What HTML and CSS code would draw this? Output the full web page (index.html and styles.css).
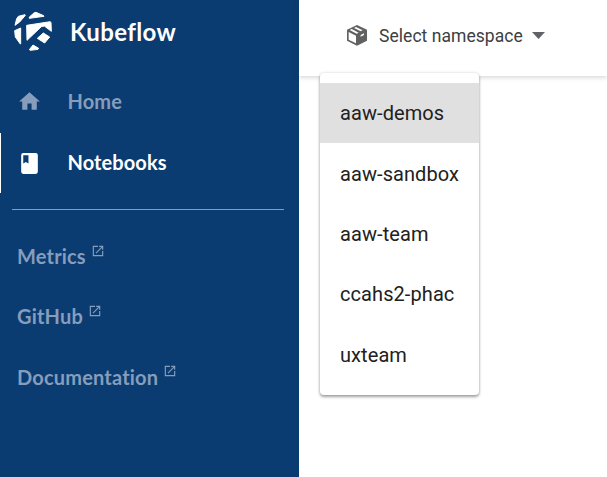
FILE: index.html
```
<!DOCTYPE html>
<html lang="en">
<head>
<meta charset="utf-8">
<title>Kubeflow</title>
<link rel="stylesheet" href="styles.css">
</head>
<body>
<div class="app">
  <aside class="sidebar">
    <div class="brand">
      <svg class="logo" width="40" height="40" viewBox="15 15 120 120"><path d="M64 33L79 20L84 19L107 29L108 31L64 37ZM21 58L26 38L31 31L51 26L52 28L35 48ZM20 74L38 66L38 114L37 114L22 93ZM56 58L127 47L129 50L130 76L109 60L100 62L57 103ZM88 97L106 81L125 93L110 111ZM64 131L75 117L92 127L90 130L67 133Z" stroke="currentColor" stroke-width="3" stroke-linejoin="round"/></svg>
      <span class="brand-name">Kubeflow</span>
    </div>
    <nav class="main-nav">
      <a class="item"><svg width="25" height="25" viewBox="0 0 24 24"><path d="M10 20v-6h4v6h5v-8h3L12 3 2 12h3v8z"/></svg><span>Home</span></a>
      <a class="item active"><svg width="25" height="25" viewBox="0 0 24 24"><path d="M18 2H6a2 2 0 0 0-2 2v16a2 2 0 0 0 2 2h12a2 2 0 0 0 2-2V4a2 2 0 0 0-2-2zM6 4h5v8l-2.500-1.500L6 12z"/></svg><span>Notebooks</span></a>
    </nav>
    <nav class="links">
      <a><span>Metrics</span><svg width="14" height="14" viewBox="0 0 24 24"><path d="M19 19H5V5h7V3H3v18h18v-9h-2zM14 3v2h3.600L7.800 14.800l1.400 1.400L19 6.400V10h2V3z"/></svg></a>
      <a><span>GitHub</span><svg width="14" height="14" viewBox="0 0 24 24"><path d="M19 19H5V5h7V3H3v18h18v-9h-2zM14 3v2h3.600L7.800 14.800l1.400 1.400L19 6.400V10h2V3z"/></svg></a>
      <a><span>Documentation</span><svg width="14" height="14" viewBox="0 0 24 24"><path d="M19 19H5V5h7V3H3v18h18v-9h-2zM14 3v2h3.600L7.800 14.800l1.400 1.400L19 6.400V10h2V3z"/></svg></a>
    </nav>
  </aside>
  <main class="content">
    <header class="toolbar">
      <svg class="box" width="20" height="21" viewBox="0 0 60 63"><path d="M30 0L60 14V47L30 62L0 47V14ZM5 21V44L27 55V32ZM8 15L29 26L35 23L14 12ZM21 9L41 19L47 16L27 6ZM41 30V35L51 30V25Z" fill-rule="evenodd"/></svg>
      <span class="select-label">Select namespace</span>
      <svg class="arrow" width="13" height="7" viewBox="0 0 13 7"><path d="M0 0h13L6.500 7z"/></svg>
      <ul class="menu">
        <li class="selected">aaw-demos</li>
        <li>aaw-sandbox</li>
        <li>aaw-team</li>
        <li>ccahs2-phac</li>
        <li>uxteam</li>
      </ul>
    </header>
  </main>
</div>
</body>
</html>
```
FILE: styles.css
```
* { box-sizing: border-box; }
body { margin: 0; font-family: Roboto, sans-serif; background: #fff; }
.app { display: flex; height: 477px; overflow: hidden; }
.sidebar { width: 299px; flex: none; background: #0a3b71; color: #869dbb; font-family: Lato, sans-serif; font-size: 20px; font-weight: 700; }
svg { display: block; flex: none; fill: currentColor; }
.brand { display: flex; align-items: center; height: 71px; padding: 0 0 9px 13px; color: #fff; }
.brand-name { margin: 2px 0 0 17px; font-size: 24px; line-height: 30px; letter-spacing: 0.4px; }
.item { display: flex; align-items: center; height: 61px; padding-left: 17px; border-left: 0 solid #fff; }
.item span { margin: -2px 0 0 25.500px; letter-spacing: .1px; }
.item.active { color: #fff; border-left-width: 1px; padding-left: 16px; height: 60px; margin-top: 1px; }
.main-nav { height: 139px; }
.main-nav::after { content: ""; display: block; height: 1px; margin: 16px 15px 0 12px; background: #869dbb; }
.links { padding: 16px 0 0 17px; letter-spacing: .18px; }
.links a { display: flex; align-items: center; height: 60.4px; }
.links span { margin-top: -.5px; }
.links svg { margin: -11px 0 0 5px; }
.content { flex: 1; }
.toolbar { position: relative; display: flex; align-items: center; height: 76px; padding: 0 0 5px 48px; color: #5f6368; box-shadow: 0 1px 5px rgba(60,64,67,.25); }
.box { fill: #616161; }
.select-label { margin-left: 12px; font-size: 17.5px; color: #3c4043; letter-spacing: .05px; white-space: nowrap; }
.arrow { margin-left: 9px; }
.menu { position: absolute; left: 21px; top: 73px; width: 159px; height: 322px; margin: 0; padding: 10px 0; list-style: none; background: #fff; border-radius: 4px; box-shadow: 0 2px 3px rgba(0,0,0,.35), 0 0 3px rgba(0,0,0,.15); color: #212121; font-size: 20px; }
.menu li { height: 60.4px; line-height: 61px; padding-left: 20px; letter-spacing: .08px; }
.menu li:nth-child(2) { line-height: 62.4px; }
.menu .selected { background: #e0e0e0; }
```
